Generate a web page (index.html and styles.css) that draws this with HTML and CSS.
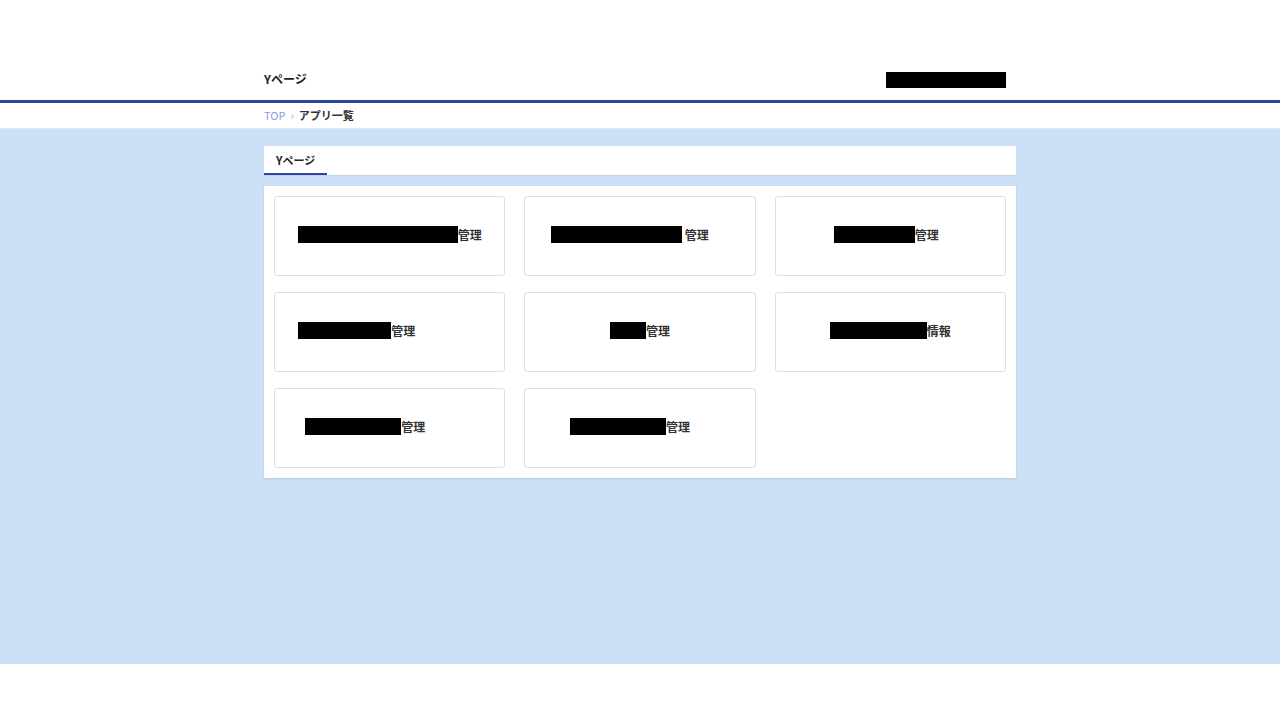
FILE: index.html
```html
<!DOCTYPE html>
<html lang="ja">
<head>
  <meta charset="UTF-8">
  <meta name="viewport" content="width=device-width, initial-scale=1.0">
  <title>Yページ - アプリ一覧</title>
  <link rel="stylesheet" href="styles.css">
</head>
<body>

  <header class="site-header">
    <div class="inner header-inner">
      <h1 class="site-title">Yページ</h1>
      <span class="redacted user-name"></span>
    </div>
  </header>

  <nav class="breadcrumb">
    <div class="inner">
      <a href="#" class="crumb-link">TOP</a>
      <span class="crumb-sep">›</span>
      <span class="crumb-current">アプリ一覧</span>
    </div>
  </nav>

  <main class="main">
    <div class="inner">
      <div class="tabs">
        <span class="tab active">Yページ</span>
      </div>

      <div class="app-panel">
        <a href="#" class="app-card"><span class="app-name"><span class="redacted" style="width:160px"></span>管理</span></a>
        <a href="#" class="app-card shift-s"><span class="app-name"><span class="redacted" style="width:131px"></span>&nbsp;管理</span></a>
        <a href="#" class="app-card shift-xs"><span class="app-name"><span class="redacted" style="width:81px"></span>管理</span></a>
        <a href="#" class="app-card shift-l"><span class="app-name"><span class="redacted" style="width:93px"></span>管理</span></a>
        <a href="#" class="app-card"><span class="app-name"><span class="redacted" style="width:36px"></span>管理</span></a>
        <a href="#" class="app-card"><span class="app-name"><span class="redacted" style="width:97px"></span>情報</span></a>
        <a href="#" class="app-card shift-m"><span class="app-name"><span class="redacted" style="width:96px"></span>管理</span></a>
        <a href="#" class="app-card shift-s"><span class="app-name"><span class="redacted" style="width:96px"></span>管理</span></a>
      </div>
    </div>
  </main>

</body>
</html>
```

FILE: styles.css
```css
body {
  font-family: "Noto Sans CJK JP", "Noto Sans", sans-serif;
  background-color: #fff;
  color: #333;
  margin: 0;
  padding: 56px 0 0;
}

a {
  text-decoration: none;
  color: inherit;
}

.inner {
  width: 752px;
  margin: 0 auto;
}

.redacted {
  display: inline-block;
  height: 16px;
  background: #000;
}

/* ヘッダー */
.site-header {
  background: #fff;
  border-bottom: 3px solid #2f43a1;
}

.header-inner {
  height: 44px;
  display: flex;
  align-items: center;
  justify-content: space-between;
}

.site-title {
  margin: 0;
  font-size: 12px;
  font-weight: bold;
  color: #222;
}

.user-name {
  width: 120px;
  margin: 4px 10px 0 0;
}

/* パンくず */
.breadcrumb {
  background: #fff;
  border-bottom: 1px solid #e3e6ea;
  font-size: 11px;
}

.breadcrumb .inner {
  height: 25px;
  display: flex;
  align-items: center;
  padding-bottom: 1px;
  box-sizing: border-box;
}

.crumb-link {
  color: #7ea3d6;
}

.crumb-sep {
  color: #aaa;
  margin: 0 5px;
}

.crumb-current {
  font-weight: bold;
  color: #333;
}

/* メイン */
.main {
  background: #cce0f7;
  height: 518px;
  padding-top: 17px;
}

.tabs {
  background: #fff;
  height: 29px;
  display: flex;
  box-shadow: 0 1px 1px rgba(0, 0, 0, 0.06);
}

.tab {
  width: 63px;
  box-sizing: border-box;
  padding-left: 12px;
  display: flex;
  align-items: center;
  font-size: 11px;
  font-weight: bold;
  color: #222;
}

.tab.active {
  border-bottom: 2px solid #2f43a1;
}

.app-panel {
  margin-top: 11px;
  background: #fff;
  padding: 10px;
  display: grid;
  grid-template-columns: repeat(3, 1fr);
  column-gap: 19px;
  row-gap: 16px;
  box-shadow: 0 1px 2px rgba(0, 0, 0, 0.12);
}

.app-card {
  height: 80px;
  box-sizing: border-box;
  border: 1px solid #e0e0e0;
  border-radius: 3px;
  display: flex;
  align-items: center;
  justify-content: center;
  padding-bottom: 3px;
}

.app-card.shift-xs { padding-right: 8px; }
.app-card.shift-s { padding-right: 20px; }
.app-card.shift-m { padding-right: 49px; }
.app-card.shift-l { padding-right: 66px; }

.app-name {
  display: flex;
  align-items: center;
  font-size: 12px;
  font-weight: bold;
  color: #333;
  line-height: 17px;
}

.app-name .redacted {
  height: 17px;
}
```
